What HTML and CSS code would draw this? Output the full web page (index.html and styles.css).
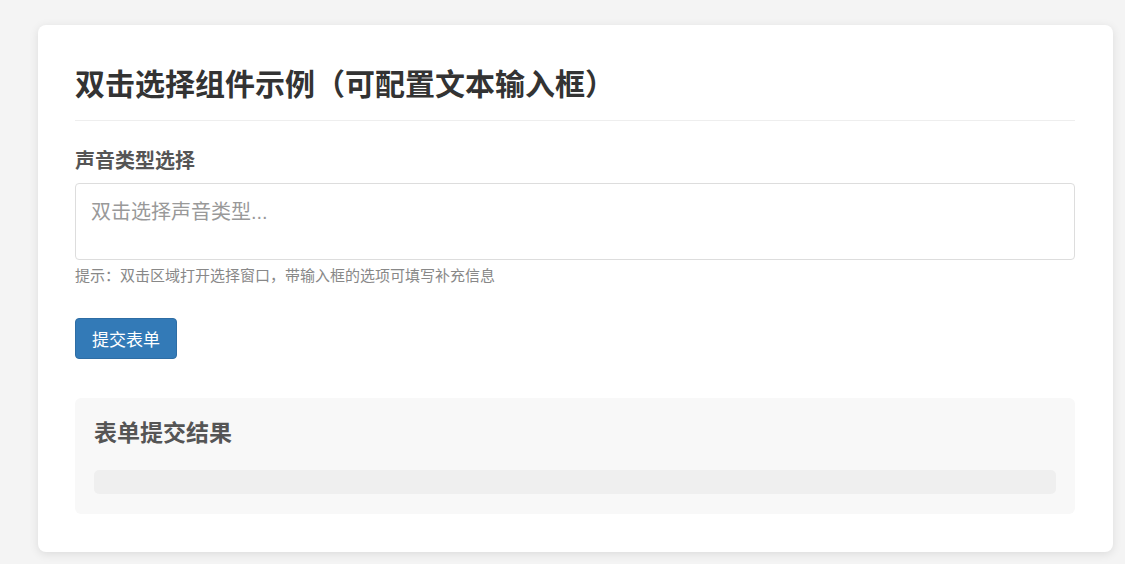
FILE: index.html
```html
<!DOCTYPE html>
<html lang="zh-CN">
<head>
  <meta charset="UTF-8" />
  <meta name="viewport" content="width=device-width, initial-scale=1.0"/>
  <title>双击选择组件示例</title>
  <link rel="stylesheet" href="styles.css">
</head>
<body>
  <div class="container">
    <h1>双击选择组件示例（可配置文本输入框）</h1>
    <form id="demo-form">
      <label for="sound-type">声音类型选择</label>
      <div class="select-box" id="sound-type">
        <span class="placeholder">双击选择声音类型...</span>
      </div>
      <p class="hint">提示：双击区域打开选择窗口，带输入框的选项可填写补充信息</p>
      <button type="submit">提交表单</button>
    </form>
    <div class="result">
      <h2>表单提交结果</h2>
      <pre class="result-output" id="result-output"></pre>
    </div>
  </div>
</body>
</html>
```

FILE: styles.css
```css
body {
  font-family: "Liberation Sans", "Noto Sans CJK SC", sans-serif;
  background: #f4f4f4;
  margin: 0;
  padding: 25px 12px 12px 38px;
}
.container {
  background: white;
  padding: 37px 38px 38px 37px;
  border-radius: 8px;
  box-shadow: 0 2px 10px rgba(0, 0, 0, 0.1);
}
h1 {
  margin: 0;
  font-size: 30px;
  line-height: 46px;
  color: #333;
  padding-bottom: 12px;
  border-bottom: 1px solid #eee;
}
label {
  display: block;
  margin-top: 28px;
  margin-bottom: 10px;
  font-size: 20px;
  line-height: 24px;
  font-weight: bold;
  color: #555;
}
.select-box {
  box-sizing: border-box;
  height: 77px;
  padding: 14px 15px;
  border: 1px solid #ddd;
  border-radius: 4px;
  cursor: pointer;
}
.placeholder {
  font-size: 20px;
  line-height: 28px;
  color: #999;
}
.hint {
  margin: 6px 0 0;
  font-size: 15px;
  line-height: 20px;
  color: #888;
}
button {
  margin-top: 32px;
  height: 41px;
  padding: 0 16px;
  background-color: #337ab7;
  color: white;
  border: 1px solid #2e6da4;
  border-radius: 4px;
  font-family: inherit;
  font-size: 17px;
  cursor: pointer;
}
.result {
  margin-top: 39px;
  padding: 20px 19px;
  background: #f8f8f8;
  border-radius: 6px;
}
.result h2 {
  margin: 0 0 22px;
  font-size: 23px;
  line-height: 30px;
  color: #555;
}
.result-output {
  margin: 0;
  height: 24px;
  background: #efefef;
  border-radius: 5px;
}
```
